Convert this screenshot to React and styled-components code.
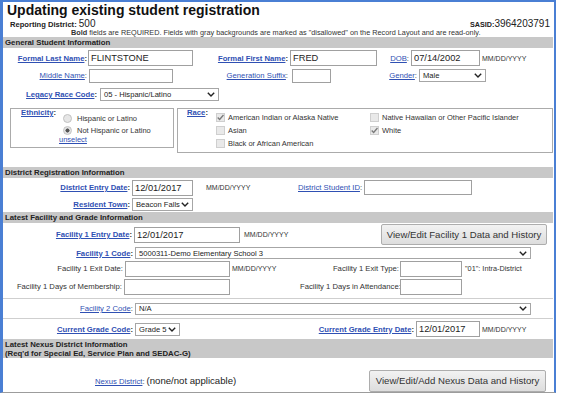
import React from "react";
import styled, { createGlobalStyle } from "styled-components";

const GlobalStyle = createGlobalStyle`
  body {
    margin: 0;
    background: #fff;
    font-family: "Liberation Sans", Arial, sans-serif;
    color: #222;
  }
`;

const Page = styled.div`
  width: 551px;
  height: 390px;
  border-top: 2px solid #4a7fd4;
  border-left: 3px solid #4a7fd4;
  border-right: 2px solid #4a7fd4;
  border-bottom: 1px solid #9c9c9c;
  font-size: 7.7px;
  overflow: hidden;
`;

const Title = styled.h1`
  margin: 0;
  padding-left: 4px;
  height: 17px;
  font-size: 14px;
  line-height: 17px;
  font-weight: 700;
  color: #111;
`;

const MetaRow = styled.div`
  display: flex;
  justify-content: space-between;
  align-items: baseline;
  height: 10px;
  line-height: 10px;
  padding: 0 4px 0 7px;
`;

const MetaKey = styled.span`
  font-weight: 700;
  font-size: ${(p) => p.$size || 7.6}px;
`;

const MetaValue = styled.span`
  font-size: 10px;
`;

const Notice = styled.div`
  height: 8px;
  line-height: 8px;
  padding-left: 68px;
  font-size: 7.3px;
  color: #333;
  white-space: nowrap;
`;

const SectionHeader = styled.div`
  margin: ${(p) => p.$mt || 0}px 1px 0 0;
  height: ${(p) => p.$h || 11}px;
  line-height: ${(p) => (p.$h ? 9 : 11)}px;
  padding: ${(p) => (p.$h ? 1 : 0)}px 0 0 2px;
  box-sizing: border-box;
  background: #c8c8c8;
  font-size: 7.8px;
  font-weight: 700;
  color: #222;
`;

const Row = styled.div`
  display: flex;
  align-items: center;
  height: ${(p) => p.$h}px;
  padding-top: ${(p) => p.$pt || 0}px;
  box-sizing: border-box;
  white-space: nowrap;
`;

const Group = styled.div`
  display: flex;
  align-items: center;
  flex: none;
  width: ${(p) => p.$w}px;
`;

const Label = styled.div`
  flex: none;
  width: ${(p) => p.$w}px;
  padding-right: ${(p) => p.$pr ?? 2}px;
  margin-left: ${(p) => p.$ml || 0}px;
  box-sizing: border-box;
  text-align: ${(p) => (p.$left ? "left" : "right")};
  font-weight: ${(p) => (p.$bold ? 700 : 400)};
  color: #333;
`;

const FieldLink = styled.a`
  color: #2f50b3;
  text-decoration: underline;
`;

const TextInput = styled.input`
  flex: none;
  width: ${(p) => p.$w}px;
  height: ${(p) => p.$h || 16}px;
  box-sizing: border-box;
  margin: 0;
  padding: 0 2px;
  border: 1px solid #a0a0a0;
  border-radius: 0;
  background: #fff;
  font-family: inherit;
  font-size: 9.3px;
  color: #222;
  outline: none;
`;

const Hint = styled.span`
  margin-left: ${(p) => p.$ml || 2}px;
  font-size: ${(p) => p.$size || 7}px;
  color: #333;
`;

const SelectBox = styled.div`
  flex: none;
  display: flex;
  align-items: center;
  justify-content: space-between;
  width: ${(p) => p.$w}px;
  height: ${(p) => p.$h || 13}px;
  box-sizing: border-box;
  padding: 0 3px 0 3px;
  border: 1px solid #a6a6a6;
  background: #fff;
  font-size: 7.6px;
  color: #222;
`;

const BoxRow = styled.div`
  display: flex;
  align-items: flex-start;
  gap: 3px;
  margin-top: 2px;
  padding-left: 7px;
`;

const FieldBox = styled.div`
  display: flex;
  align-items: flex-start;
  width: ${(p) => p.$w}px;
  height: ${(p) => p.$h}px;
  box-sizing: border-box;
  padding-left: ${(p) => p.$pl}px;
  border: 1px solid #ababab;
`;

const BoxTitle = styled.div`
  flex: none;
  width: ${(p) => p.$w}px;
  line-height: 8px;
  font-weight: 700;
  color: #333;
`;

const OptionColumn = styled.div`
  display: flex;
  flex-direction: column;
  margin-top: 3px;
`;

const OptionGrid = styled.div`
  display: grid;
  grid-template-columns: 154px auto;
  grid-template-rows: repeat(3, 13px);
  grid-auto-flow: column;
  margin-top: 2px;
`;

const Option = styled.div`
  display: flex;
  align-items: center;
  gap: ${(p) => p.$gap || 3}px;
  height: ${(p) => p.$h || 12}px;
  font-size: 7.5px;
  color: #333;
  white-space: nowrap;
`;

const UnselectLink = styled(FieldLink)`
  margin-left: -4px;
  line-height: 8px;
  font-size: 7.5px;
`;

const Radio = styled.span`
  flex: none;
  width: 9px;
  height: 9px;
  box-sizing: border-box;
  border-radius: 50%;
  border: 1px solid #c2c2c2;
  background: ${(p) =>
    p.$on
      ? "radial-gradient(circle, #555 0 1.8px, #e4e4e4 2.3px)"
      : "#e6e6e6"};
`;

const Check = styled.span`
  flex: none;
  display: flex;
  align-items: center;
  justify-content: center;
  width: 9px;
  height: 9px;
  box-sizing: border-box;
  border: 1px solid #cfcfcf;
  background: #e9e9e9;
`;

const Divider = styled.div`
  margin: ${(p) => p.$mt ?? 2}px 1px 0 0;
  height: 1px;
  background: #cfcfcf;
`;

const ActionButton = styled.button`
  flex: none;
  width: ${(p) => p.$w}px;
  height: ${(p) => p.$h}px;
  margin: 0 ${(p) => p.$mr}px 0 auto;
  padding: 0;
  border: 1px solid #adadad;
  border-radius: 2px;
  background: linear-gradient(#f2f2f2, #dddddd);
  font-family: inherit;
  font-size: 9.6px;
  color: #333;
`;

const PlainValue = styled.span`
  margin-left: 2px;
  font-size: 9.6px;
  color: #222;
`;

const Chevron = () => (
  <svg width="8" height="5" viewBox="0 0 8 5">
    <polyline points="0.8,0.8 4,4 7.2,0.8" fill="none" stroke="#222" strokeWidth="1.4" />
  </svg>
);

const Select = ({ value, ...rest }) => (
  <SelectBox {...rest}>
    <span>{value}</span>
    <Chevron />
  </SelectBox>
);

const CheckMark = () => (
  <svg width="8" height="7" viewBox="0 0 8 7">
    <polyline points="0.8,3.6 3,5.8 7.4,0.6" fill="none" stroke="#7a7a7a" strokeWidth="1.5" />
  </svg>
);

const CheckOption = ({ on, children }) => (
  <Option $h={13}>
    <Check>{on && <CheckMark />}</Check>
    {children}
  </Option>
);

const Field = ({ w, bold, pr, children, plain }) => (
  <Label $w={w} $bold={bold} $pr={pr}>
    {plain ? children : <FieldLink href="#">{children}</FieldLink>}:
  </Label>
);

const App = () => {
  return (
    <>
      <GlobalStyle />
      <Page>
        <Title>Updating existing student registration</Title>
        <MetaRow>
          <span>
            <MetaKey>Reporting District: </MetaKey>
            <MetaValue>500</MetaValue>
          </span>
          <span>
            <MetaKey $size={7.2}>SASID:</MetaKey>
            <MetaValue>3964203791</MetaValue>
          </span>
        </MetaRow>
        <Notice>
          <b>Bold</b> fields are REQUIRED. Fields with gray backgrounds are marked as
          "disallowed" on the Record Layout and are read-only.
        </Notice>

        <SectionHeader>General Student Information</SectionHeader>
        <Row $h={20}>
          <Field w={85} bold pr={1}>Formal Last Name</Field>
          <TextInput $w={105} defaultValue="FLINTSTONE" />
          <Field w={97} bold>Formal First Name</Field>
          <TextInput $w={87} defaultValue="FRED" />
          <Field w={34}>DOB</Field>
          <TextInput $w={69} defaultValue="07/14/2002" />
          <Hint>MM/DD/YYYY</Hint>
        </Row>
        <Row $h={15}>
          <Field w={86}>Middle Name</Field>
          <TextInput $w={84} $h={14} />
          <Field w={119} pr={4}>Generation Suffix</Field>
          <TextInput $w={39} $h={14} />
          <Field w={88}>Gender</Field>
          <Select $w={67} $h={13} value="Male" />
        </Row>
        <Row $h={23}>
          <Field w={97} bold pr={3}>Legacy Race Code</Field>
          <Select $w={119} value="05 - Hispanic/Latino" />
        </Row>

        <BoxRow>
          <FieldBox $w={164} $h={40} $pl={10}>
            <BoxTitle $w={42}>
              <FieldLink href="#">Ethnicity</FieldLink>:
            </BoxTitle>
            <OptionColumn>
              <Option $gap={5}>
                <Radio />
                Hispanic or Latino
              </Option>
              <Option $gap={5}>
                <Radio $on />
                Not Hispanic or Latino
              </Option>
              <UnselectLink href="#">unselect</UnselectLink>
            </OptionColumn>
          </FieldBox>
          <FieldBox $w={376} $h={45} $pl={9}>
            <BoxTitle $w={29}>
              <FieldLink href="#">Race</FieldLink>:
            </BoxTitle>
            <OptionGrid>
              <CheckOption on>American Indian or Alaska Native</CheckOption>
              <CheckOption>Asian</CheckOption>
              <CheckOption>Black or African American</CheckOption>
              <CheckOption>Native Hawaiian or Other Pacific Islander</CheckOption>
              <CheckOption on>White</CheckOption>
            </OptionGrid>
          </FieldBox>
        </BoxRow>

        <SectionHeader $mt={14}>District Registration Information</SectionHeader>
        <Row $h={19}>
          <Group $w={295}>
            <Field w={129} bold>District Entry Date</Field>
            <TextInput $w={61} defaultValue="12/01/2017" />
            <Hint $ml={13}>MM/DD/YYYY</Hint>
          </Group>
          <Field w={66}>District Student ID</Field>
          <TextInput $w={108} $h={15} />
        </Row>
        <Row $h={15}>
          <Field w={129} bold>Resident Town</Field>
          <Select $w={61} $h={13} value="Beacon Falls" />
        </Row>

        <SectionHeader>Latest Facility and Grade Information</SectionHeader>
        <Row $h={23}>
          <Field w={131} bold>Facility 1 Entry Date</Field>
          <TextInput $w={106} defaultValue="12/01/2017" />
          <Hint $ml={4}>MM/DD/YYYY</Hint>
          <ActionButton $w={166} $h={21} $mr={7}>
            View/Edit Facility 1 Data and History
          </ActionButton>
        </Row>
        <Row $h={14}>
          <Field w={132} bold>Facility 1 Code</Field>
          <Select $w={396} $h={12} value="5000311-Demo Elementary School 3" />
        </Row>
        <Row $h={17}>
          <Group $w={297}>
            <Field w={122} plain>Facility 1 Exit Date</Field>
            <TextInput $w={105} />
            <Hint>MM/DD/YYYY</Hint>
          </Group>
          <Field w={100} plain pr={1}>Facility 1 Exit Type</Field>
          <TextInput $w={62} />
          <Hint $ml={3} $size={7.3}>"01": Intra-District</Hint>
        </Row>
        <Row $h={19}>
          <Group $w={297}>
            <Field w={121} plain>Facility 1 Days of Membership</Field>
            <TextInput $w={106} />
          </Group>
          <Field w={100} plain pr={1}>Facility 1 Days in Attendance</Field>
          <TextInput $w={62} />
        </Row>
        <Divider />
        <Row $h={19}>
          <Field w={132}>Facility 2 Code</Field>
          <Select $w={396} $h={12} value="N/A" />
        </Row>
        <Divider $mt={0} />
        <Row $h={20}>
          <Field w={132} bold>Current Grade Code</Field>
          <Select $w={45} value="Grade 5" />
          <Field w={236} bold>Current Grade Entry Date</Field>
          <TextInput $w={64} defaultValue="12/01/2017" />
          <Hint>MM/DD/YYYY</Hint>
        </Row>

        <SectionHeader $h={19}>
          Latest Nexus District Information
          <br />
          (Req'd for Special Ed, Service Plan and SEDAC-G)
        </SectionHeader>
        <Row $h={34} $pt={11}>
          <Label $w={127} $ml={92} $left $pr={0}>
            <FieldLink href="#">Nexus District</FieldLink>:
            <PlainValue>(none/not applicable)</PlainValue>
          </Label>
          <ActionButton $w={177} $h={22} $mr={8}>
            View/Edit/Add Nexus Data and History
          </ActionButton>
        </Row>
      </Page>
    </>
  );
};

export default App;
